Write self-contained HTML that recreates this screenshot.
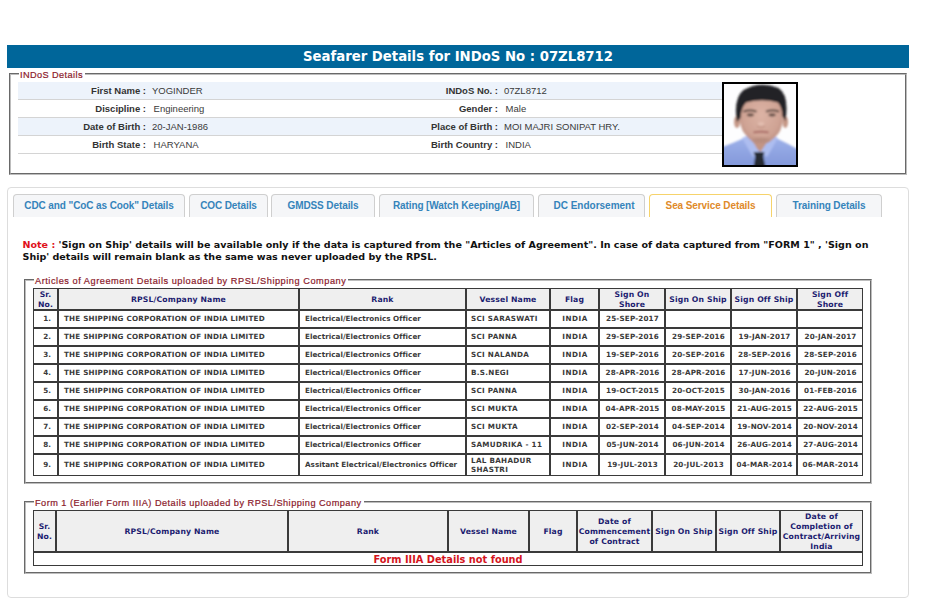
<!DOCTYPE html>
<html><head><meta charset="utf-8"><title>Seafarer Details</title>
<style>
html,body{margin:0;padding:0;background:#fff;}
body{width:948px;height:598px;overflow:hidden;position:relative;font-family:"Liberation Sans",Arial,sans-serif;font-size:10px;color:#333;}
.vb{font-family:"DejaVu Sans",Verdana,sans-serif;font-weight:bold;}
#hdr{position:absolute;left:7px;top:45px;width:902px;height:23px;background:#00669a;color:#fff;text-align:center;font-family:"DejaVu Sans",Verdana,sans-serif;font-weight:bold;font-size:13.25px;line-height:23px;white-space:nowrap;}
fieldset{margin:0;padding:0;border:2px groove #bdbdbd;position:absolute;box-sizing:border-box;min-width:0;}
legend{padding:0 2px 0 1px;color:#8b1a2b;-webkit-text-stroke:0.2px #8b1a2b;font-family:"Liberation Sans",Arial,sans-serif;white-space:nowrap;}
#fs1{left:9px;top:68px;width:898px;height:107px;}
#fs1 legend{margin-left:8px;font-size:9.2px;letter-spacing:0.4px;line-height:12px;}
legend span{position:relative;top:1.1px;}
.irow{position:absolute;left:18px;width:704px;height:17px;border-bottom:1px solid #d4d4d4;line-height:17px;font-size:9.5px;}
.irow.alt{background:#edf3fb;}
.irow span{position:absolute;top:0;white-space:nowrap;}
.irow .l{font-weight:bold;text-align:right;color:#333;}
.irow .l1{left:0;width:128px;}
.irow .v1{left:134px;color:#3a3a3a;}
.irow .l2{left:300px;width:180px;}
.irow .v2{left:486px;color:#3a3a3a;}
#photo{position:absolute;left:722px;top:82px;width:72px;height:81px;border:2px solid #000;background:#fff;overflow:hidden;}
#photo svg{display:block;}
#tabs{position:absolute;left:7px;top:187px;width:902px;height:411px;border:1px solid #ddd;border-radius:4px;box-sizing:border-box;}
.tab{position:absolute;top:194px;height:23px;box-sizing:border-box;border:1px solid #cfcfcf;border-bottom:none;border-radius:4px 4px 0 0;background:#f5f6f8;color:#3584bb;font-weight:bold;font-size:10px;letter-spacing:-0.1px;line-height:22px;text-align:center;white-space:nowrap;}
.tab.act{background:#fff;border-color:#f6d36b;color:#e08a2a;}
#note{position:absolute;left:22.5px;top:239px;font-size:9.55px;line-height:11.8px;color:#111;white-space:nowrap;}
#note b{color:#e0101a;}
#fs2{left:24px;top:274px;width:848px;height:210px;}
#fs3{left:24px;top:496px;width:848px;height:78px;}
#fs2 legend,#fs3 legend{margin-left:8px;font-size:9.2px;letter-spacing:0.54px;line-height:12px;}
#fs3 legend{letter-spacing:0.47px;}
table{position:absolute;left:33px;width:830px;table-layout:fixed;border-collapse:separate;border-spacing:0;font-family:"DejaVu Sans",Verdana,sans-serif;font-weight:bold;font-size:7.2px;color:#3a3a3a;}
#t1{top:288px;}
#t2{top:510px;}
td,th{border:1px solid #3a3a3a;padding:0;box-sizing:border-box;overflow:hidden;white-space:nowrap;vertical-align:middle;}
th{background:#efefef;color:#1c1c70;font-size:7.7px;line-height:10px;text-align:center;font-weight:bold;letter-spacing:0.15px;}
th div{position:relative;top:1px;}
#t1 td div{position:relative;top:-1px;}
#t1 tr.h th{height:22px;}
#t1 td{height:18px;line-height:9px;}
#t1 tr.last td{height:22px;}
#t2 tr.h th{height:42px;}
#t2 tr.nf td{height:14px;text-align:center;color:#d4141c;font-size:9.8px;line-height:12px;}
#t2 tr.nf td div{position:relative;top:1px;}
td.sr{text-align:right;padding-right:6px;}
td.co{padding-left:5px;letter-spacing:0.2px;}
td.rk{padding-left:5px;letter-spacing:0.04px;}
td.vs{padding-left:4px;letter-spacing:0.3px;}
#t1 tr.last td.vs div{top:0;}
td.c{text-align:center;letter-spacing:0.15px;padding-left:1px;}
td.fl{letter-spacing:0.5px;}
</style></head><body>
<div id="hdr">Seafarer Details for INDoS No : 07ZL8712</div>
<fieldset id="fs1"><legend><span>INDoS Details</span></legend></fieldset>
<div class="irow alt" style="top:82px"><span class="l l1">First Name :</span><span class="v1">YOGINDER</span><span class="l l2">INDoS No. :</span><span class="v2">07ZL8712</span></div>
<div class="irow " style="top:100px"><span class="l l1">Discipline :</span><span class="v1" style="margin-left:1.6px">Engineering</span><span class="l l2">Gender :</span><span class="v2" style="margin-left:1.6px">Male</span></div>
<div class="irow alt" style="top:118px"><span class="l l1">Date of Birth :</span><span class="v1">20-JAN-1986</span><span class="l l2">Place of Birth :</span><span class="v2">MOI MAJRI SONIPAT HRY.</span></div>
<div class="irow " style="top:136px"><span class="l l1">Birth State :</span><span class="v1" style="margin-left:1.6px">HARYANA</span><span class="l l2">Birth Country :</span><span class="v2" style="margin-left:1.6px">INDIA</span></div>
<div id="photo"><svg width="72" height="81" viewBox="0 0 72 81">
<defs>
<filter id="bl" x="-10%" y="-10%" width="120%" height="120%"><feGaussianBlur stdDeviation="0.9"/></filter>
<filter id="bl2" x="-20%" y="-20%" width="140%" height="140%"><feGaussianBlur stdDeviation="1.6"/></filter>
<radialGradient id="fg" cx="0.5" cy="0.45" r="0.6"><stop offset="0" stop-color="#dcb3a5"/><stop offset="0.7" stop-color="#cfa394"/><stop offset="1" stop-color="#b88a7c"/></radialGradient>
<linearGradient id="sg" x1="0" y1="0" x2="0" y2="1"><stop offset="0" stop-color="#9fb2ea"/><stop offset="1" stop-color="#8197da"/></linearGradient>
</defs>
<rect width="72" height="81" fill="#fdfdfe"/>
<g filter="url(#bl)">
<path d="M-3 63.5 Q8 59.5 18 55 L26 52 L36 62 L46 52 L54 55 Q64 59.5 75 66 L75 84 L-3 84 Z" fill="url(#sg)"/>
<path d="M25 48 L49 48 L50 58 L37 68 L24 58 Z" fill="#c29584"/>
<path d="M18 54 L25 51 L35 68 L29 73 Z" fill="#adbdf0"/>
<path d="M54 54 L48 51 L36.5 68 L43 73 Z" fill="#adbdf0"/>
<path d="M29.5 68 L40.5 68 L39.3 72.5 L41.5 83 L29.5 83 L31.2 72.5 Z" fill="#262b33"/>
<ellipse cx="13" cy="38" rx="3" ry="6" fill="#c59786"/>
<ellipse cx="61.3" cy="38" rx="2.8" ry="6" fill="#c59786"/>
<path d="M15.5 30 Q14 8 37 7 Q60 8 59 30 Q59 44 54 50 Q46 60 37 60 Q28 60 21 50 Q15.5 44 15.5 30 Z" fill="url(#fg)"/>
<path d="M13 38 Q9 15 19.5 6 Q36 -3.5 54.5 4 Q65.5 11 61.5 37 L58.3 32 Q58.5 24 54 18.5 Q38 14 22 18.5 Q17 24 16.5 34 Z" fill="#242326"/>
<path d="M19.5 27.6 Q26 25 32.5 27.6" stroke="#4a3a34" stroke-width="1.7" fill="none"/>
<path d="M42 27.6 Q48.5 25 55 27.6" stroke="#4a3a34" stroke-width="1.7" fill="none"/>
<ellipse cx="26.4" cy="31" rx="3.6" ry="1.4" fill="#5c463f"/>
<ellipse cx="48.1" cy="31" rx="3.6" ry="1.4" fill="#5c463f"/>
<path d="M29.5 48.3 Q37 46.8 44.5 48.3" stroke="#a5645e" stroke-width="1.8" fill="none"/>
<ellipse cx="37" cy="40" rx="3.2" ry="2.2" fill="#e2bcae"/>
<path d="M33 42.3 Q37 44 41 42.3" stroke="#b58576" stroke-width="0.9" fill="none"/>
</g>
<ellipse cx="37" cy="56" rx="9" ry="2.2" fill="#a87f70" opacity="0.55" filter="url(#bl2)"/>
</svg></div>
<div id="tabs"></div>
<div class="tab" style="left:13px;width:172px;">CDC and &quot;CoC as Cook&quot; Details</div>
<div class="tab" style="left:189px;width:79px;">COC Details</div>
<div class="tab" style="left:271px;width:104px;">GMDSS Details</div>
<div class="tab" style="left:379px;width:155px;">Rating [Watch Keeping/AB]</div>
<div class="tab" style="left:538px;width:107px;padding-left:5px;letter-spacing:0;">DC Endorsement</div>
<div class="tab act" style="left:649px;width:123px;">Sea Service Details</div>
<div class="tab" style="left:776px;width:106px;">Training Details</div>
<div id="note" class="vb"><b>Note :</b> 'Sign on Ship' details will be available only if the data is captured from the "Articles of Agreement". In case of data captured from "FORM 1" , 'Sign on<br>Ship' details will remain blank as the same was never uploaded by the RPSL.</div>
<fieldset id="fs2"><legend><span>Articles of Agreement Details uploaded by RPSL/Shipping Company</span></legend></fieldset>
<fieldset id="fs3"><legend><span>Form 1 (Earlier Form IIIA) Details uploaded by RPSL/Shipping Company</span></legend></fieldset>
<table id="t1">
<colgroup><col style="width:25px"><col style="width:241px"><col style="width:167px"><col style="width:84px"><col style="width:49px"><col style="width:66px"><col style="width:66px"><col style="width:66px"><col style="width:66px"></colgroup>
<tr class="h"><th><div>Sr.<br>No.</div></th><th><div>RPSL/Company Name</div></th><th><div>Rank</div></th><th><div>Vessel Name</div></th><th><div>Flag</div></th><th><div>Sign On<br>Shore</div></th><th><div>Sign On Ship</div></th><th><div>Sign Off Ship</div></th><th><div>Sign Off<br>Shore</div></th></tr>
<tr><td class="sr"><div>1.</div></td><td class="co"><div>THE SHIPPING CORPORATION OF INDIA LIMITED</div></td><td class="rk"><div>Electrical/Electronics Officer</div></td><td class="vs"><div>SCI SARASWATI</div></td><td class="c fl"><div>INDIA</div></td><td class="c"><div>25-SEP-2017</div></td><td class="c"><div></div></td><td class="c"><div></div></td><td class="c"><div></div></td></tr>
<tr><td class="sr"><div>2.</div></td><td class="co"><div>THE SHIPPING CORPORATION OF INDIA LIMITED</div></td><td class="rk"><div>Electrical/Electronics Officer</div></td><td class="vs"><div>SCI PANNA</div></td><td class="c fl"><div>INDIA</div></td><td class="c"><div>29-SEP-2016</div></td><td class="c"><div>29-SEP-2016</div></td><td class="c"><div>19-JAN-2017</div></td><td class="c"><div>20-JAN-2017</div></td></tr>
<tr><td class="sr"><div>3.</div></td><td class="co"><div>THE SHIPPING CORPORATION OF INDIA LIMITED</div></td><td class="rk"><div>Electrical/Electronics Officer</div></td><td class="vs"><div>SCI NALANDA</div></td><td class="c fl"><div>INDIA</div></td><td class="c"><div>19-SEP-2016</div></td><td class="c"><div>20-SEP-2016</div></td><td class="c"><div>28-SEP-2016</div></td><td class="c"><div>28-SEP-2016</div></td></tr>
<tr><td class="sr"><div>4.</div></td><td class="co"><div>THE SHIPPING CORPORATION OF INDIA LIMITED</div></td><td class="rk"><div>Electrical/Electronics Officer</div></td><td class="vs"><div>B.S.NEGI</div></td><td class="c fl"><div>INDIA</div></td><td class="c"><div>28-APR-2016</div></td><td class="c"><div>28-APR-2016</div></td><td class="c"><div>17-JUN-2016</div></td><td class="c"><div>20-JUN-2016</div></td></tr>
<tr><td class="sr"><div>5.</div></td><td class="co"><div>THE SHIPPING CORPORATION OF INDIA LIMITED</div></td><td class="rk"><div>Electrical/Electronics Officer</div></td><td class="vs"><div>SCI PANNA</div></td><td class="c fl"><div>INDIA</div></td><td class="c"><div>19-OCT-2015</div></td><td class="c"><div>20-OCT-2015</div></td><td class="c"><div>30-JAN-2016</div></td><td class="c"><div>01-FEB-2016</div></td></tr>
<tr><td class="sr"><div>6.</div></td><td class="co"><div>THE SHIPPING CORPORATION OF INDIA LIMITED</div></td><td class="rk"><div>Electrical/Electronics Officer</div></td><td class="vs"><div>SCI MUKTA</div></td><td class="c fl"><div>INDIA</div></td><td class="c"><div>04-APR-2015</div></td><td class="c"><div>08-MAY-2015</div></td><td class="c"><div>21-AUG-2015</div></td><td class="c"><div>22-AUG-2015</div></td></tr>
<tr><td class="sr"><div>7.</div></td><td class="co"><div>THE SHIPPING CORPORATION OF INDIA LIMITED</div></td><td class="rk"><div>Electrical/Electronics Officer</div></td><td class="vs"><div>SCI MUKTA</div></td><td class="c fl"><div>INDIA</div></td><td class="c"><div>02-SEP-2014</div></td><td class="c"><div>04-SEP-2014</div></td><td class="c"><div>19-NOV-2014</div></td><td class="c"><div>20-NOV-2014</div></td></tr>
<tr><td class="sr"><div>8.</div></td><td class="co"><div>THE SHIPPING CORPORATION OF INDIA LIMITED</div></td><td class="rk"><div>Electrical/Electronics Officer</div></td><td class="vs"><div>SAMUDRIKA - 11</div></td><td class="c fl"><div>INDIA</div></td><td class="c"><div>05-JUN-2014</div></td><td class="c"><div>06-JUN-2014</div></td><td class="c"><div>26-AUG-2014</div></td><td class="c"><div>27-AUG-2014</div></td></tr>
<tr class="last"><td class="sr"><div>9.</div></td><td class="co"><div>THE SHIPPING CORPORATION OF INDIA LIMITED</div></td><td class="rk"><div>Assitant Electrical/Electronics Officer</div></td><td class="vs"><div>LAL BAHADUR<br>SHASTRI</div></td><td class="c fl"><div>INDIA</div></td><td class="c"><div>19-JUL-2013</div></td><td class="c"><div>20-JUL-2013</div></td><td class="c"><div>04-MAR-2014</div></td><td class="c"><div>06-MAR-2014</div></td></tr>
</table>
<table id="t2">
<colgroup><col style="width:23px"><col style="width:232px"><col style="width:160px"><col style="width:81px"><col style="width:48px"><col style="width:75px"><col style="width:64px"><col style="width:64px"><col style="width:83px"></colgroup>
<tr class="h"><th><div>Sr.<br>No.</div></th><th><div>RPSL/Company Name</div></th><th><div>Rank</div></th><th><div>Vessel Name</div></th><th><div>Flag</div></th><th><div>Date of<br>Commencement<br>of Contract</div></th><th><div>Sign On Ship</div></th><th><div>Sign Off Ship</div></th><th><div>Date of<br>Completion of<br>Contract/Arriving<br>India</div></th></tr>
<tr class="nf"><td colspan="9"><div>Form IIIA Details not found</div></td></tr>
</table>
</body></html>
